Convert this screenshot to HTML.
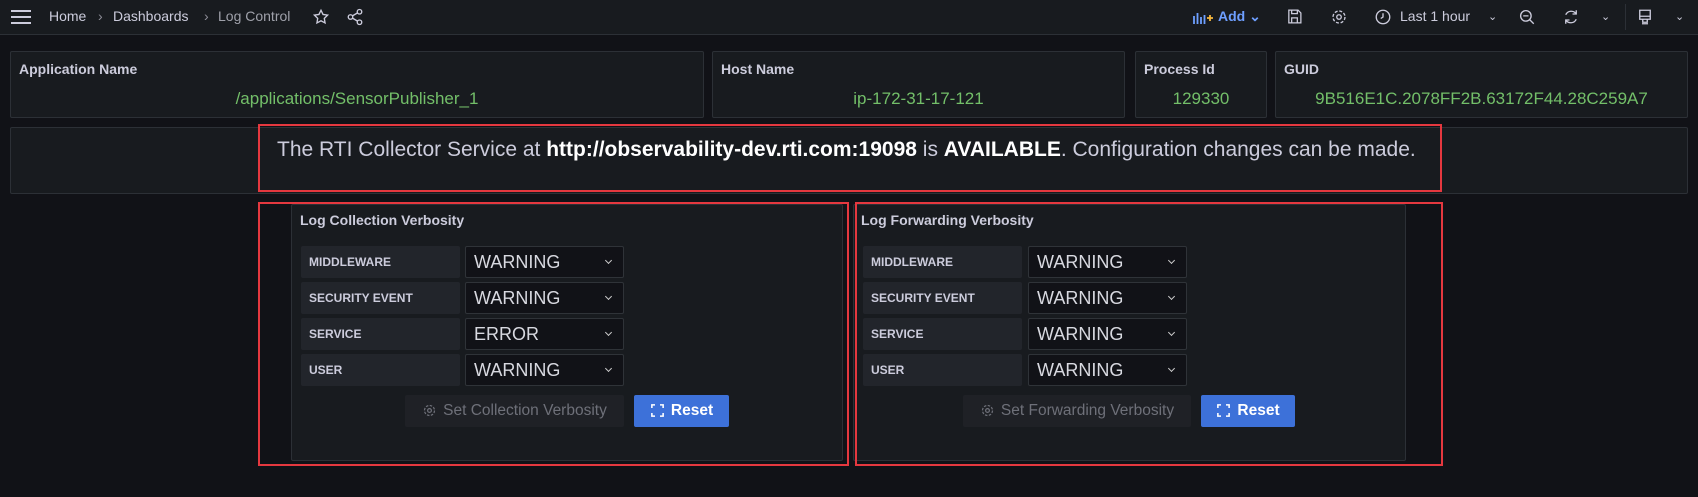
<!DOCTYPE html>
<html><head><meta charset="utf-8"><style>
*{box-sizing:border-box;margin:0;padding:0}
body{width:1698px;height:497px;background:#111217;font-family:"Liberation Sans",sans-serif;color:#ccccdc;position:relative;overflow:hidden;font-size:14px}
.a{position:absolute}
.top{left:0;top:0;width:1698px;height:35px;background:#181b1f;border-bottom:1px solid #2c3036}
.p{position:absolute;background:#181b1f;border:1px solid #2c3036;border-radius:2px}
.t{position:absolute;left:8px;top:9px;font-size:14px;font-weight:bold;color:#ccccdc}
.v{position:absolute;left:0;right:0;top:37px;text-align:center;color:#73bf69;font-size:17px}
.red{position:absolute;border:2px solid #e5383f}
.lab{position:absolute;background:#22252b;height:32px;width:159px;font-size:12px;font-weight:bold;padding-left:8px;line-height:32px;color:#ccccdc;border-radius:2px}
.sel{position:absolute;background:#111217;border:1px solid #2f3338;height:32px;width:159px;font-size:18px;padding-left:8px;line-height:30px;color:#d8d9e0;border-radius:2px;transform-origin:left}
.sel:after{content:"";position:absolute;right:12px;top:11px;width:4px;height:4px;border-right:1.3px solid #ccc;border-bottom:1.3px solid #ccc;transform:rotate(45deg)}
.btn{position:absolute;height:32px;line-height:32px;font-size:15.5px;border-radius:2px;text-align:center}
.set{background:#1f2126;color:#6e7079}
.rst{background:#3d71d9;color:#fff;font-weight:bold}
.nav{position:absolute;top:8px;font-size:14px;color:#ccccdc}
.g{display:inline-block;vertical-align:-3px;margin-right:6px}
</style></head><body>
<div class="a top"></div>
<svg class="a" style="left:10px;top:8px" width="22" height="18" viewBox="0 0 22 18"><path d="M1 3h20M1 9h20M1 15h20" stroke="#ccccdc" stroke-width="2"/></svg>
<div class="nav" style="left:49px">Home</div>
<div class="nav" style="left:98px;color:#8e8e98">›</div>
<div class="nav" style="left:113px">Dashboards</div>
<div class="nav" style="left:204px;color:#8e8e98">›</div>
<div class="nav" style="left:218px;color:#9fa1aa">Log Control</div>
<svg class="a" style="left:312px;top:8px" width="18" height="18" viewBox="0 0 24 24"><path d="M12 3l2.7 5.6 6.1.9-4.4 4.3 1 6.1L12 17l-5.4 2.9 1-6.1-4.4-4.3 6.1-.9z" fill="none" stroke="#ccccdc" stroke-width="1.8"/></svg>
<svg class="a" style="left:346px;top:8px" width="18" height="18" viewBox="0 0 24 24"><g fill="none" stroke="#ccccdc" stroke-width="1.8"><circle cx="18" cy="5" r="3"/><circle cx="6" cy="12" r="3"/><circle cx="18" cy="19" r="3"/><path d="M8.6 10.5l6.8-4M8.6 13.5l6.8 4"/></g></svg>
<svg class="a" style="left:1193px;top:11px" width="20" height="13" viewBox="0 0 20 13"><path d="M1 5v8M4.5 2v11M8 6v7M11.5 4v9" stroke="#6e9fff" stroke-width="1.8"/><path d="M14 7h6M17 4v6" stroke="#f5b73d" stroke-width="1.8"/></svg>
<div class="nav" style="left:1218px;color:#6e9fff;font-weight:bold">Add ⌄</div>
<svg class="a" style="left:1286px;top:8px" width="17" height="17" viewBox="0 0 24 24"><path d="M4 3h13l4 4v14H4z M8 3v5h8V3 M8 21v-7h8v7" fill="none" stroke="#ccccdc" stroke-width="1.8"/></svg>
<svg class="a" style="left:1330px;top:8px" width="18" height="18" viewBox="0 0 24 24"><circle cx="12" cy="12" r="3" fill="none" stroke="#ccccdc" stroke-width="1.8"/><circle cx="12" cy="12" r="8" fill="none" stroke="#ccccdc" stroke-width="1.8" stroke-dasharray="4 2.3"/></svg>
<svg class="a" style="left:1374px;top:8px" width="18" height="18" viewBox="0 0 24 24"><circle cx="12" cy="12" r="9" fill="none" stroke="#ccccdc" stroke-width="1.8"/><path d="M12 7v5l-3 2" fill="none" stroke="#ccccdc" stroke-width="1.8"/></svg>
<div class="nav" style="left:1400px">Last 1 hour</div>
<div class="nav" style="left:1488px;font-size:11px;top:10px">⌄</div>
<svg class="a" style="left:1518px;top:8px" width="18" height="18" viewBox="0 0 24 24"><circle cx="10.5" cy="10.5" r="7" fill="none" stroke="#ccccdc" stroke-width="1.8"/><path d="M7 10.5h7M15.5 15.5L21 21" stroke="#ccccdc" stroke-width="1.8"/></svg>
<svg class="a" style="left:1562px;top:8px" width="18" height="18" viewBox="0 0 24 24"><path d="M19 8a8 8 0 0 0-14 1M5 16a8 8 0 0 0 14-1M19 3v5h-5M5 21v-5h5" fill="none" stroke="#ccccdc" stroke-width="1.8"/></svg>
<div class="nav" style="left:1601px;font-size:11px;top:10px">⌄</div>
<div class="a" style="left:1625px;top:4px;width:1px;height:26px;background:#2c3036"></div>
<svg class="a" style="left:1636px;top:8px" width="18" height="18" viewBox="0 0 24 24"><path d="M5 3h14v12H5zM5 11h14M9 15v4h6v-4M8 21h8" fill="none" stroke="#ccccdc" stroke-width="1.8"/></svg>
<div class="nav" style="left:1675px;font-size:11px;top:10px">⌄</div>

<div class="p" style="left:10px;top:51px;width:694px;height:67px"><div class="t">Application Name</div><div class="v">/applications/SensorPublisher_1</div></div>
<div class="p" style="left:712px;top:51px;width:413px;height:67px"><div class="t">Host Name</div><div class="v">ip-172-31-17-121</div></div>
<div class="p" style="left:1135px;top:51px;width:132px;height:67px"><div class="t">Process Id</div><div class="v">129330</div></div>
<div class="p" style="left:1275px;top:51px;width:413px;height:67px"><div class="t">GUID</div><div class="v">9B516E1C.2078FF2B.63172F44.28C259A7</div></div>

<div class="p" style="left:10px;top:127px;width:1678px;height:67px"></div>
<div class="red" style="left:258px;top:124px;width:1184px;height:68px"></div>
<div class="a" style="left:277px;top:138px;font-size:21px;color:#ccccdc;white-space:nowrap">The RTI Collector Service at <b style="color:#fff">http://observability-dev.rti.com:19098</b> is <b style="color:#fff">AVAILABLE</b>. Configuration changes can be made.</div>

<div class="p" style="left:291px;top:204px;width:552px;height:257px"></div>
<div class="red" style="left:258px;top:202px;width:591px;height:264px"></div>
<div class="a" style="left:300px;top:212px;font-weight:bold;font-size:14px">Log Collection Verbosity</div>
<div class="lab" style="left:301px;top:246px">MIDDLEWARE</div><div class="sel" style="left:465px;top:246px">WARNING</div>
<div class="lab" style="left:301px;top:282px">SECURITY EVENT</div><div class="sel" style="left:465px;top:282px">WARNING</div>
<div class="lab" style="left:301px;top:318px">SERVICE</div><div class="sel" style="left:465px;top:318px">ERROR</div>
<div class="lab" style="left:301px;top:354px">USER</div><div class="sel" style="left:465px;top:354px">WARNING</div>
<div class="btn set" style="left:405px;top:395px;width:219px"><svg class="g" width="15" height="15" viewBox="0 0 24 24"><circle cx="12" cy="12" r="3" fill="none" stroke="#6e7079" stroke-width="2"/><circle cx="12" cy="12" r="8" fill="none" stroke="#6e7079" stroke-width="2" stroke-dasharray="4 2.3"/></svg>Set Collection Verbosity</div>
<div class="btn rst" style="left:634px;top:395px;width:95px"><svg class="g" width="15" height="15" viewBox="0 0 24 24"><path d="M3 8V3h5M16 3h5v5M21 16v5h-5M8 21H3v-5" fill="none" stroke="#fff" stroke-width="2.5"/></svg>Reset</div>

<div class="p" style="left:853px;top:204px;width:553px;height:257px"></div>
<div class="red" style="left:855px;top:202px;width:588px;height:264px"></div>
<div class="a" style="left:861px;top:212px;font-weight:bold;font-size:14px">Log Forwarding Verbosity</div>
<div class="lab" style="left:863px;top:246px">MIDDLEWARE</div><div class="sel" style="left:1028px;top:246px">WARNING</div>
<div class="lab" style="left:863px;top:282px">SECURITY EVENT</div><div class="sel" style="left:1028px;top:282px">WARNING</div>
<div class="lab" style="left:863px;top:318px">SERVICE</div><div class="sel" style="left:1028px;top:318px">WARNING</div>
<div class="lab" style="left:863px;top:354px">USER</div><div class="sel" style="left:1028px;top:354px">WARNING</div>
<div class="btn set" style="left:963px;top:395px;width:228px"><svg class="g" width="15" height="15" viewBox="0 0 24 24"><circle cx="12" cy="12" r="3" fill="none" stroke="#6e7079" stroke-width="2"/><circle cx="12" cy="12" r="8" fill="none" stroke="#6e7079" stroke-width="2" stroke-dasharray="4 2.3"/></svg>Set Forwarding Verbosity</div>
<div class="btn rst" style="left:1201px;top:395px;width:94px"><svg class="g" width="15" height="15" viewBox="0 0 24 24"><path d="M3 8V3h5M16 3h5v5M21 16v5h-5M8 21H3v-5" fill="none" stroke="#fff" stroke-width="2.5"/></svg>Reset</div>
</body></html>
